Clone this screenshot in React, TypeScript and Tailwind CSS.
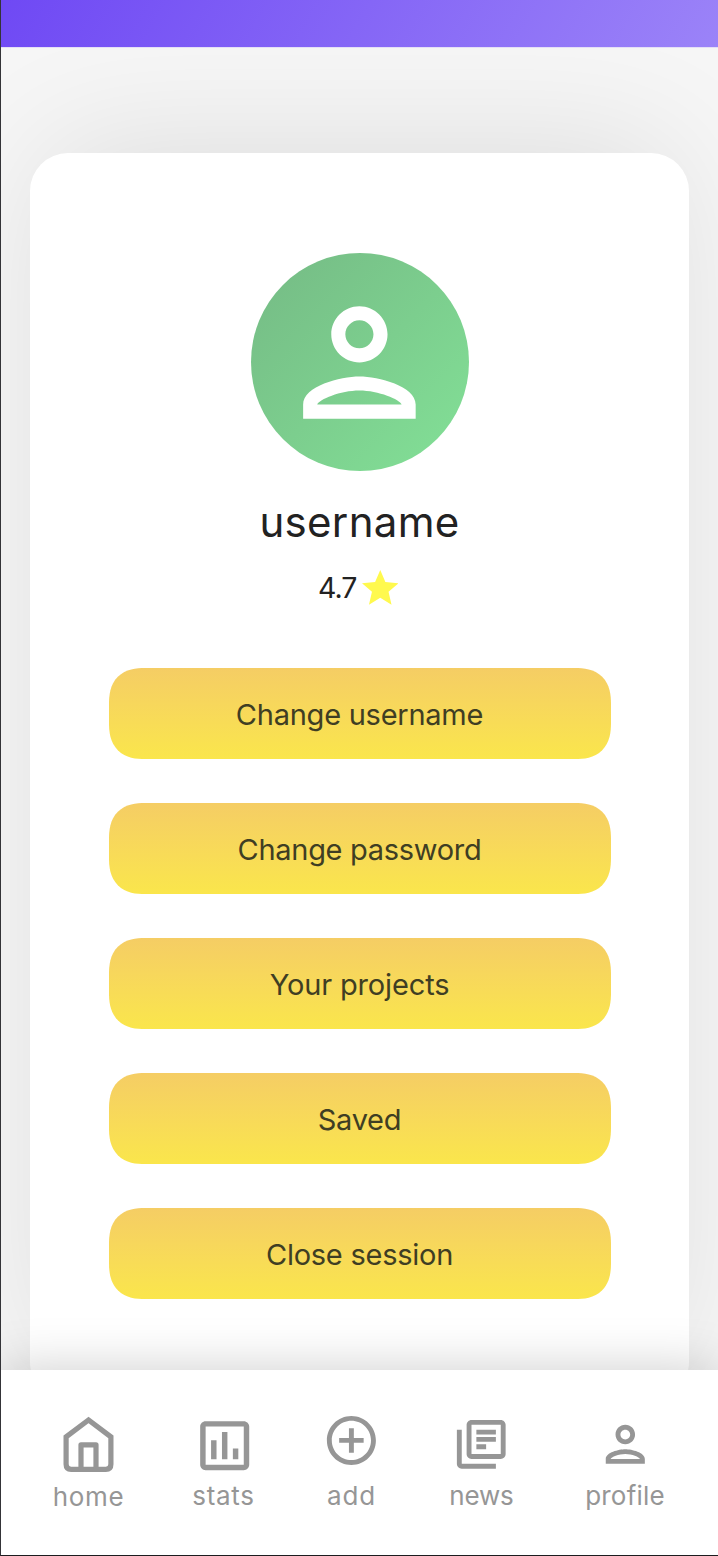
import React from "react";

const PERSON =
  "M12 6c1.1 0 2 .9 2 2s-.9 2-2 2-2-.9-2-2 .9-2 2-2m0 10c2.7 0 5.8 1.29 6 2H6c.23-.72 3.31-2 6-2m0-12C9.79 4 8 5.79 8 8s1.79 4 4 4 4-1.79 4-4-1.79-4-4-4zm0 10c-2.67 0-8 1.34-8 4v2h16v-2c0-2.66-5.33-4-8-4z";
const CHART =
  "M19 3H5c-1.1 0-2 .9-2 2v14c0 1.1.9 2 2 2h14c1.1 0 2-.9 2-2V5c0-1.1-.9-2-2-2zm0 16H5V5h14v14zM7 10h2v7H7zm4-3h2v10h-2zm4 6h2v4h-2z";
const ADD =
  "M13 7h-2v4H7v2h4v4h2v-4h4v-2h-4V7zm-1-5C6.48 2 2 6.48 2 12s4.48 10 10 10 10-4.48 10-10S17.52 2 12 2zm0 18c-4.41 0-8-3.59-8-8s3.59-8 8-8 8 3.59 8 8-3.59 8-8 8z";
const NEWS =
  "M4 6H2v14c0 1.1.9 2 2 2h14v-2H4V6zm16-4H8c-1.1 0-2 .9-2 2v12c0 1.1.9 2 2 2h12c1.1 0 2-.9 2-2V4c0-1.1-.9-2-2-2zm0 14H8V4h12v12zM10 9h8v2h-8zm0 3h4v2h-4zm0-6h8v2h-8z";

function Glyph({ d, className }: { d: string; className: string }) {
  return (
    <svg viewBox="0 0 24 24" fill="currentColor" className={`shrink-0 ${className}`}>
      <path d={d} />
    </svg>
  );
}

function HomeIcon() {
  return (
    <svg viewBox="0 0 52 56" fill="none" stroke="currentColor" strokeWidth="5.2" className="mt-[46px] h-[56px] w-[52px] shrink-0">
      <path d="M25.5 4 3.1 20.8V48.3q0 5 5 5h34.8q5 0 5-5V20.8Z" />
      <path d="M18 53V28.8h15V53" strokeLinejoin="round" />
    </svg>
  );
}

const actions = [
  { label: "Change username", tracking: "tracking-[-0.25px]" },
  { label: "Change password", tracking: "tracking-[-0.3px]" },
  { label: "Your projects", tracking: "tracking-[-0.15px]" },
  { label: "Saved", tracking: "tracking-[-0.3px]" },
  { label: "Close session", tracking: "tracking-[-0.25px]" },
];

const tabs = [
  { label: "home", icon: <HomeIcon />, pad: "pt-[1px]", tracking: "tracking-[0.7px]" },
  { label: "stats", icon: <Glyph d={CHART} className="mt-[43px] ml-[2px] size-[65.4px]" />, pad: "", tracking: "tracking-[0.7px]" },
  { label: "add", icon: <Glyph d={ADD} className="mt-[41px] size-[58.8px]" />, pad: "", tracking: "tracking-[0.9px]" },
  { label: "news", icon: <Glyph d={NEWS} className="mt-[45px] size-[58.5px]" />, pad: "", tracking: "tracking-[-0.2px]" },
  { label: "profile", icon: <Glyph d={PERSON} className="mt-[45px] size-[58.6px]" />, pad: "", tracking: "tracking-[0.2px]" },
];

export default function App() {
  return (
    <div className="flex h-[1556px] w-[718px] flex-col overflow-hidden border-b border-l border-b-[#1c1c1e] border-l-[#343438] bg-[#f6f6f6] font-['Inter',sans-serif] font-normal">
      <header className="h-[48px] shrink-0 border-b border-[#e4dff6] bg-linear-[120deg,#6f49f4,#9b83f8]" />

      <main className="h-[1322px] shrink-0 overflow-hidden pt-[105px] pl-[29px]">
        <section className="flex h-[1247px] w-[659px] flex-col items-center rounded-[38px] bg-white pt-[100px] shadow-[0_-20px_135px_-18px_rgba(0,0,0,0.11)]">
          <div className="flex size-[218px] shrink-0 items-center justify-center rounded-full bg-linear-[135deg,#76bd86_8%,#82df96_95%] text-white">
            <Glyph d={PERSON} className="size-[168.8px]" />
          </div>
          <h1 className="mt-[21px] h-[60px] text-[42px] leading-[60px] tracking-[0.3px] text-[#222222]">username</h1>
          <div className="mt-[16px] mr-[3px] flex h-[40px] items-center gap-[5px] text-[28.5px] leading-[40px] text-[#222222]">
            <span className="pb-[1px] tracking-[-0.9px]">4.7</span>
            <svg viewBox="2 2 20 20" className="mt-[1px] size-[36.5px]" fill="#fff94e">
              <path d="M12 17.27 18.18 21l-1.64-7.03L22 9.24l-7.19-.61L12 2 9.19 8.63 2 9.24l5.46 4.73L5.82 21z" />
            </svg>
          </div>

          <div className="mt-[60px] flex flex-col gap-[44px]">
            {actions.map((a) => (
              <button
                key={a.label}
                className={`h-[91px] w-[502px] rounded-[36px] bg-linear-to-b from-[#f5cd64] to-[#fae64b] pt-[2px] text-[29px] leading-[40px] text-[#3f3e23] [corner-shape:superellipse(1.3)] ${a.tracking}`}
              >
                {a.label}
              </button>
            ))}
          </div>
        </section>
      </main>

      <nav className="z-10 grid h-[185px] shrink-0 grid-cols-[135px_135px_121px_139px_148px] bg-white pl-[20px] text-[#969696] shadow-[0_0_50px_rgba(0,0,0,0.2)]">
        {tabs.map((t) => (
          <a key={t.label} className="flex h-[185px] flex-col items-center">
            <span className="flex h-[108px] flex-col items-center">{t.icon}</span>
            <span className={`text-[26px] leading-[36px] ${t.pad} ${t.tracking}`}>{t.label}</span>
          </a>
        ))}
      </nav>
    </div>
  );
}
